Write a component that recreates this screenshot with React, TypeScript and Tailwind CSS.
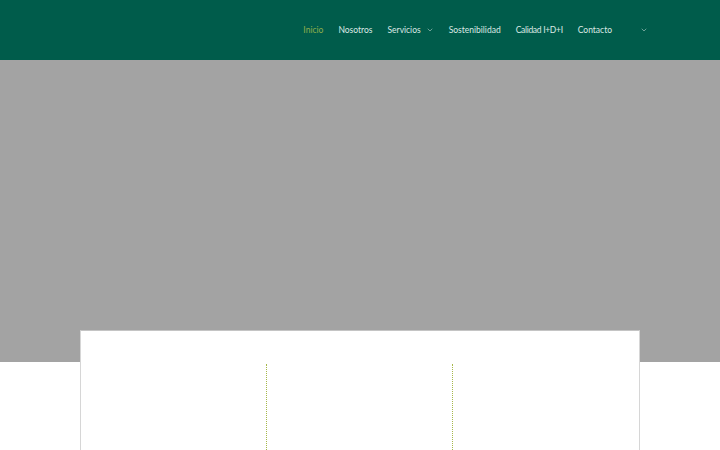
import { ChevronDown } from "lucide-react";

const links = [
  { label: "Inicio", active: true },
  { label: "Nosotros" },
  { label: "Servicios", caret: true },
  { label: "Sostenibilidad" },
  { label: "Calidad I+D+I", tight: true },
  { label: "Contacto" },
];

export default function App() {
  return (
    <div className="min-h-[450px] bg-white font-['Lato',sans-serif]">
      <header className="flex h-[60px] items-center justify-end bg-[#005c4b] pr-[72px]">
        <nav className="flex items-center gap-[15px] text-[8.5px] font-normal text-[#dde9e5]">
          {links.map((l) => (
            <a
              key={l.label}
              className={`flex items-center gap-[5px] ${l.active ? "text-[#8fae4c]" : ""} ${l.tight ? "tracking-[-0.3px]" : ""}`}
            >
              {l.label}
              {l.caret && <ChevronDown size={8} strokeWidth={1.5} />}
            </a>
          ))}
          <span className="ml-[13px] flex items-center">
            <ChevronDown size={8} strokeWidth={1.5} />
          </span>
        </nav>
      </header>
      <div className="h-[302px] bg-[#a3a3a3]" />
      <section className="mx-[80px] -mt-[32px] border border-[#d6d6d6] border-t-[#c4c4c4] bg-white pt-[33px]">
        <div className="grid h-[200px] grid-cols-3">
          <div className="border-r border-dotted border-[#a7b84a]" />
          <div className="border-r border-dotted border-[#a7b84a]" />
          <div />
        </div>
      </section>
    </div>
  );
}
